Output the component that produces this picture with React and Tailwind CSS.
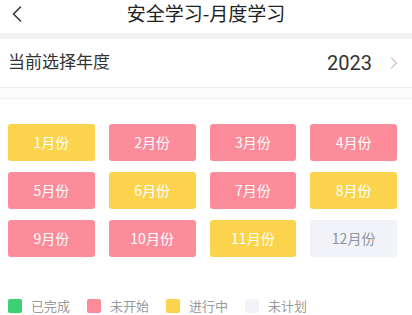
import { ChevronLeft, ChevronRight } from "lucide-react"

const months = [
  { label: "1月份", status: "doing" },
  { label: "2月份", status: "todo" },
  { label: "3月份", status: "todo" },
  { label: "4月份", status: "todo" },
  { label: "5月份", status: "todo" },
  { label: "6月份", status: "doing" },
  { label: "7月份", status: "todo" },
  { label: "8月份", status: "doing" },
  { label: "9月份", status: "todo" },
  { label: "10月份", status: "todo" },
  { label: "11月份", status: "doing" },
  { label: "12月份", status: "none" },
]

const styles = {
  done: "bg-[#3ecf72] text-white",
  todo: "bg-[#fd8c9b] text-white",
  doing: "bg-[#fbd34d] text-white",
  none: "bg-[#f1f3f9] text-[#8e949c]",
}

const legend = [
  { label: "已完成", color: "bg-[#3ecf72]" },
  { label: "未开始", color: "bg-[#fd8c9b]" },
  { label: "进行中", color: "bg-[#fbd34d]" },
  { label: "未计划", color: "bg-[#f1f3f9]" },
]

export default function App() {
  return (
    <div
      className="w-[412px] h-[315px] bg-white overflow-hidden"
      style={{ fontFamily: '"Noto Sans CJK SC", "Noto Sans", sans-serif' }}
    >
      {/* Header */}
      <div className="relative h-[33px] flex items-center justify-center">
        <ChevronLeft className="absolute left-[3px] top-0 w-[28px] h-[28px] text-[#333]" strokeWidth={1.3} />
        <span className="text-[19px] text-[#222] leading-none -mt-[9px]">安全学习-月度学习</span>
      </div>
      <div className="h-[6px] bg-[#f2f2f2]" />

      {/* Year row */}
      <div className="h-[49px] flex items-center justify-between pl-2 pr-[8px] border-b border-[#ececec]">
        <span className="text-[17px] text-[#333] -mt-[4px]">当前选择年度</span>
        <div className="flex items-center gap-[12px]">
          <span className="text-[20px] text-[#333]" style={{ fontFamily: "Roboto, sans-serif" }}>2023</span>
          <ChevronRight className="w-[20px] h-[20px] text-[#c8c8c8]" strokeWidth={1.3} />
        </div>
      </div>
      <div className="h-[11px] bg-[#fcfcfc] border-b border-[#eeeeee]" />

      {/* Months */}
      <div className="grid grid-cols-4 gap-x-[14px] gap-y-[11px] pl-2 pr-[15px] pt-[25px]">
        {months.map((m) => (
          <div
            key={m.label}
            className={`h-[37px] rounded-[3px] flex items-center justify-center text-[14px] ${styles[m.status]}`}
          >
            {m.label}
          </div>
        ))}
      </div>

      {/* Legend */}
      <div className="flex items-center pl-2 mt-[39px]">
        {legend.map((l) => (
          <div key={l.label} className="flex items-center mr-[17px]">
            <span className={`w-[14px] h-[14px] rounded-[2px] ${l.color}`} />
            <span className="ml-[9px] text-[13px] text-[#9a9a9a]">{l.label}</span>
          </div>
        ))}
      </div>
    </div>
  )
}
